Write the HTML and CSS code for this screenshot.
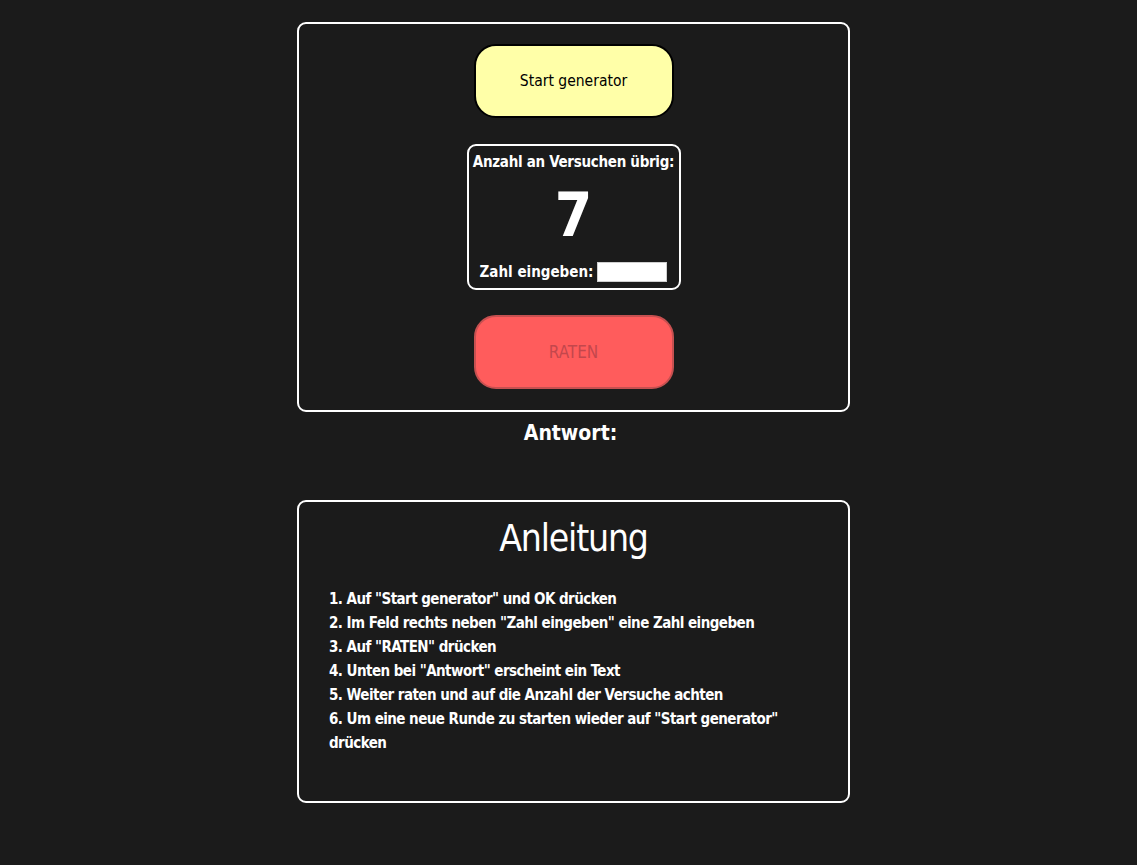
FILE: index.html
```html
<!DOCTYPE html>
<html lang="de">
<head>
<meta charset="utf-8">
<title>Zahlenraten</title>
<link rel="stylesheet" href="styles.css">
</head>
<body>
<main class="page">
  <section class="card game">
    <button class="btn btn-start">Start generator</button>
    <div class="counter">
      <div class="counter-label">Anzahl an Versuchen übrig:</div>
      <div class="counter-value">7</div>
      <label class="counter-input">Zahl eingeben: <input type="text" class="num-input"></label>
    </div>
    <button class="btn btn-guess" disabled>RATEN</button>
  </section>
  <h2 class="answer">Antwort:</h2>
  <section class="card guide">
    <h1 class="guide-title">Anleitung</h1>
    <p class="guide-text">1. Auf "Start generator" und OK drücken<br>
2. Im Feld rechts neben "Zahl eingeben" eine Zahl eingeben<br>
3. Auf "RATEN" drücken<br>
4. Unten bei "Antwort" erscheint ein Text<br>
5. Weiter raten und auf die Anzahl der Versuche achten<br>
6. Um eine neue Runde zu starten wieder auf "Start generator" drücken</p>
  </section>
</main>
</body>
</html>
```
FILE: styles.css
```css
html, body {
  margin: 0;
  padding: 0;
  background: #1b1b1b;
  color: #ffffff;
  font-family: "DejaVu Sans Condensed", "DejaVu Sans", sans-serif;
}
.page {
  width: 553px;
  margin: 22px 0 0 297px;
  display: flex;
  flex-direction: column;
  align-items: stretch;
}
.card {
  border: 2px solid #ffffff;
  border-radius: 9px;
  box-sizing: border-box;
}
.game {
  height: 390px;
  display: flex;
  flex-direction: column;
  align-items: center;
  padding-top: 20px;
}
.btn {
  width: 200px;
  height: 74px;
  border-radius: 22px;
  font-family: inherit;
  font-size: 15.5px;
  box-sizing: border-box;
}
.btn-start {
  background: #ffffa8;
  border: 2px solid #000000;
  color: #000000;
}
.btn-guess {
  background: #ff5c5c;
  border: 2px solid #c65050;
  color: #c3474c;
  font-size: 17px;
  margin-top: 25px;
}
.counter {
  margin-top: 26px;
  width: 214px;
  height: 146px;
  box-sizing: border-box;
  border: 2px solid #ffffff;
  border-radius: 9px;
  display: flex;
  flex-direction: column;
  align-items: center;
  padding-top: 5px;
}
.counter-label {
  font-size: 15px;
  font-weight: bold;
  line-height: 22px;
  letter-spacing: -0.3px;
}
.counter-value {
  font-size: 60px;
  font-weight: bold;
  line-height: 66px;
  margin-top: 9px;
}
.counter-input {
  font-size: 15px;
  font-weight: bold;
  line-height: 24px;
  display: flex;
  align-items: center;
  gap: 4px;
  margin-top: 12px;
}
.num-input {
  width: 70px;
  height: 20px;
  box-sizing: border-box;
  border: 1px solid #cfcfcf;
  background: #ffffff;
  padding: 0;
}
.answer {
  margin: 7px 0 0 0;
  text-align: center;
  font-size: 21px;
  line-height: 28px;
  font-weight: bold;
  padding-right: 6px;
}
.guide {
  margin-top: 53px;
  height: 303px;
  padding: 12px 49px 0 30px;
}
.guide-title {
  margin: 0;
  text-align: center;
  font-size: 37px;
  letter-spacing: -1.2px;
  line-height: 50px;
  font-weight: normal;
  padding-left: 19px;
}
.guide-text {
  margin: 23px 0 0 0;
  font-size: 15px;
  line-height: 24px;
  font-weight: bold;
  letter-spacing: -0.55px;
}
```
